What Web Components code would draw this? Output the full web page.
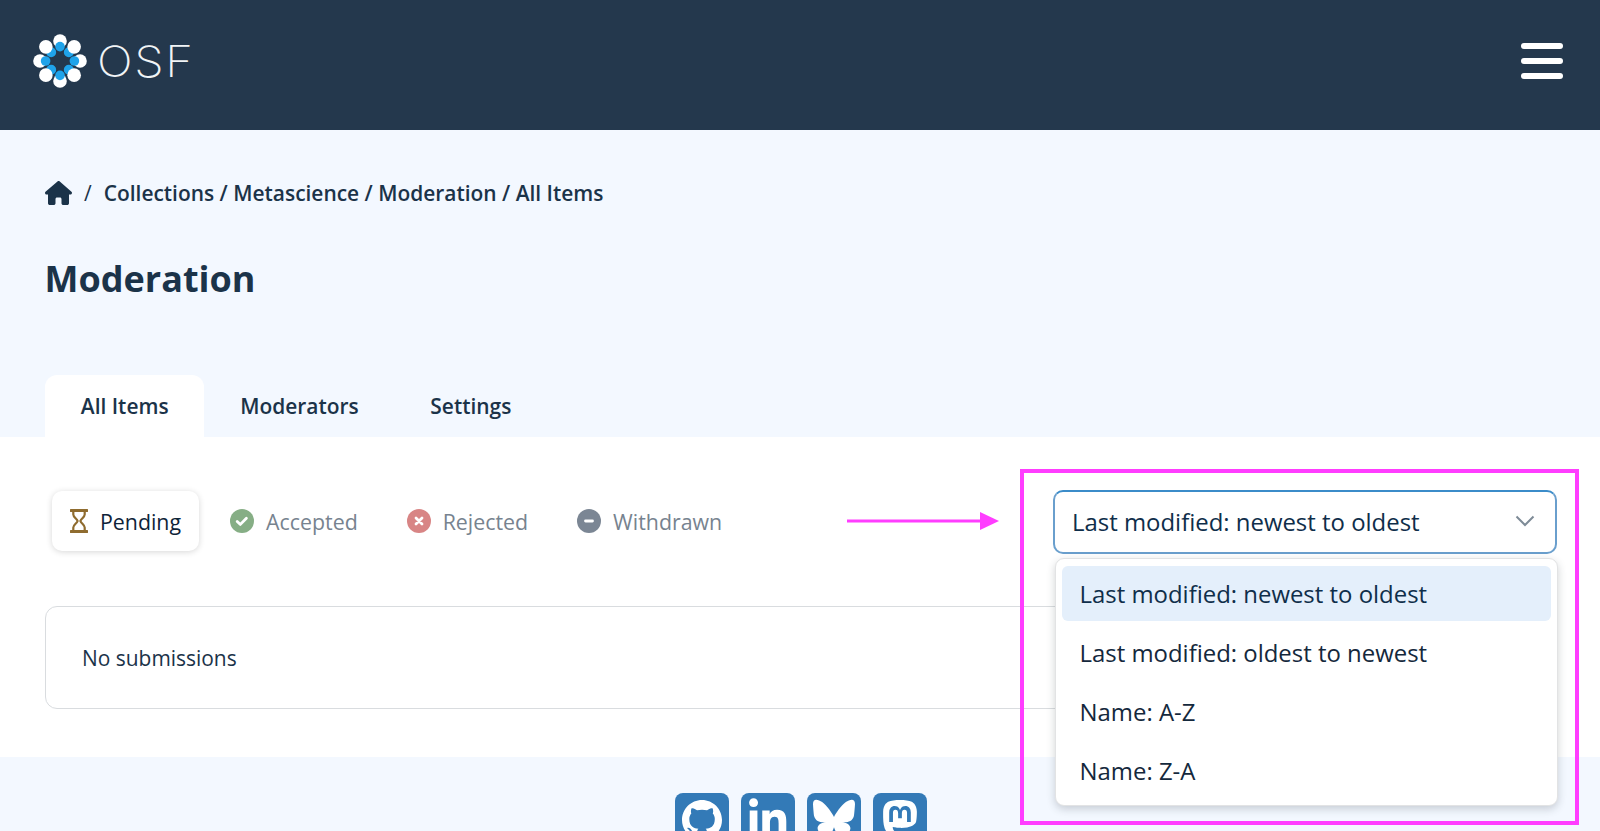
<!DOCTYPE html>
<html lang="en">
<head>
<meta charset="utf-8">
<title>Moderation</title>
<style>
  html, body { margin: 0; height: 831px; overflow: hidden; background: #f3f8ff; }
  body { font-family: "Open Sans", "Noto Sans", sans-serif; color: #1b3349; position: relative; }
</style>
</head>
<body>
<osf-header></osf-header>
<page-head>
  <tab-item active>All Items</tab-item>
  <tab-item>Moderators</tab-item>
  <tab-item>Settings</tab-item>
</page-head>
<mod-panel>
  <status-filter slot="filters"></status-filter>
  <sort-select slot="sort"></sort-select>
</mod-panel>
<site-footer></site-footer>
<callout-marks></callout-marks>

<script>
// top bar with the logo and the hamburger
class OsfHeader extends HTMLElement {
  constructor() {
    super()
    // diagonal blue dots go under the white ones, the straight ones on top
    let under = '', white = '', over = ''
    for (let i = 0; i < 8; i++) {
      const a = i * 45
      white += `<circle cx="30" cy="10" r="6.8" fill="#fff" transform="rotate(${a} 30 30)"/>`
      if (i % 2) under += `<circle cx="30" cy="17.5" r="5" fill="#1fa3ea" transform="rotate(${a} 30 30)"/>`
      else over += `<circle cx="30" cy="15.6" r="4.8" fill="#1fa3ea" transform="rotate(${a} 30 30)"/>`
    }
    this.attachShadow({ mode: 'open' }).innerHTML = `
      <style>
        :host { display: flex; height: 130px; background: #24384d; align-items: center; justify-content: space-between; padding: 0 37px 8px 29.5px; box-sizing: border-box; }
        .logo { display: flex; align-items: center; gap: 7px; }
        svg { display: block; }
        .name { font: 200 43px/1 Inter, "Open Sans", sans-serif; color: #f1f4f6; letter-spacing: 1.5px; transform: scaleX(1.1); transform-origin: left center; }
        .burger { display: flex; flex-direction: column; gap: 9px; }
        .burger i { display: block; width: 42px; height: 6px; border-radius: 3px; background: #fff; }
      </style>
      <div class="logo">
        <svg width="60" height="60" viewBox="0 0 60 60">${under}${white}${over}</svg>
        <span class="name">OSF</span>
      </div>
      <div class="burger"><i></i><i></i><i></i></div>`
  }
}

// breadcrumb, title and the tab row
class PageHead extends HTMLElement {
  constructor() {
    super()
    this.attachShadow({ mode: 'open' }).innerHTML = `
      <style>
        :host { display: block; height: 307px; padding: 49px 0 0 45px; box-sizing: border-box; }
        .crumbs { display: flex; align-items: center; height: 28px; font-size: 20.93px; font-weight: 600; color: #1b3349; }
        .crumbs svg { width: 27px; height: 24px; display: block; }
        .sep { margin: 0 12px 0 12px; font-weight: 400; }
        h1 { margin: 48px 0 0 -0.5px; font-size: 36px; line-height: 48px; font-weight: 700; color: #1b3349; }
        .tabs { display: flex; margin-top: 72px; }
      </style>
      <div class="crumbs">
        <svg viewBox="0 0 576 512"><path fill="#1b3349" d="M575.8 255.5c0 18-15 32.1-32 32.1h-32l.7 160.2c0 2.7-.2 5.4-.5 8.1V472c0 22.1-17.9 40-40 40H456c-1.1 0-2.2 0-3.3-.1c-1.4 .1-2.8 .1-4.2 .1H416 392c-22.1 0-40-17.9-40-40V448 384c0-17.7-14.3-32-32-32H256c-17.7 0-32 14.3-32 32v64 24c0 22.1-17.9 40-40 40H160 128.1c-1.5 0-3-.1-4.5-.2c-1.2 .1-2.4 .2-3.6 .2H104c-22.1 0-40-17.9-40-40V360c0-.9 0-1.9 .1-2.8V287.6H32c-18 0-32-14-32-32.1c0-9 3-17 10-24L266.4 8c7-7 15-8 22-8s15 2 21 7L564.8 231.5c8 7 12 15 11 24z"/></svg>
        <span class="sep">/</span>
        <span>Collections / Metascience / Moderation / All Items</span>
      </div>
      <h1>Moderation</h1>
      <div class="tabs"><slot></slot></div>`
  }
}

class TabItem extends HTMLElement {
  constructor() {
    super()
    this.attachShadow({ mode: 'open' }).innerHTML = `
      <style>
        :host { display: flex; align-items: center; height: 62px; padding: 0 35.8px; font-size: 20.93px; font-weight: 600; color: #1b3349; border-radius: 12px 12px 0 0; }
        :host([active]) { background: #fff; }
      </style>
      <slot></slot>`
  }
}

// white area, filters on the left and sort select on the right
class ModPanel extends HTMLElement {
  constructor() {
    super()
    this.attachShadow({ mode: 'open' }).innerHTML = `
      <style>
        :host { display: block; height: 320px; background: #fff; padding: 53px 43px 0 45px; box-sizing: border-box; }
        .top { display: flex; justify-content: space-between; align-items: flex-start; height: 64px; padding-left: 7px; }
        .card { margin: 52px 1px 0 0; height: 103px; box-sizing: border-box; border: 1px solid #d9dcdf; border-radius: 12px; display: flex; align-items: center; padding-left: 36px; font-size: 20.93px; color: #1b3349; }
      </style>
      <div class="top"><slot name="filters"></slot><slot name="sort"></slot></div>
      <div class="card">No submissions</div>`
  }
}

class StatusFilter extends HTMLElement {
  constructor() {
    super()
    const round = (color, mark) => `<svg width="24" height="24" viewBox="0 0 24 24"><circle cx="12" cy="12" r="12" fill="${color}"/>${mark}</svg>`
    const wht = 'fill="none" stroke="#fff" stroke-width="2.8" stroke-linecap="round" stroke-linejoin="round"'
    this.attachShadow({ mode: 'open' }).innerHTML = `
      <style>
        :host { display: flex; gap: 13px; font-size: 21.35px; margin-top: 1px; }
        .item { display: flex; align-items: center; gap: 12px; height: 60px; padding: 0 18px; color: #77838f; box-sizing: border-box; }
        .on { color: #0e2338; background: #fff; border-radius: 10px; box-shadow: 0 1px 6px rgba(0,0,0,.16); }
        svg { display: block; flex: none; }
      </style>
      <div class="item on">
        <svg width="18" height="24" viewBox="0 0 18 24">
          <path d="M1 1.5h16M1 22.5h16" stroke="#8f6c2f" stroke-width="3" stroke-linecap="round"/>
          <path d="M3.3 2v3.5c0 2.6 3.7 4.2 4.3 6.5c-.6 2.3-4.3 3.9-4.3 6.5V22M14.7 2v3.5c0 2.6-3.7 4.2-4.3 6.5c.6 2.3 4.3 3.9 4.3 6.5V22" fill="none" stroke="#8f6c2f" stroke-width="2.2"/>
        </svg>
        <span>Pending</span>
      </div>
      <div class="item">${round('#86ae85', `<path d="M7.2 12.4l3.2 3l6-6.2" ${wht}/>`)}<span>Accepted</span></div>
      <div class="item">${round('#d88585', `<path d="M9 9l6 6M15 9l-6 6" ${wht}/>`)}<span>Rejected</span></div>
      <div class="item">${round('#7b8694', `<path d="M8.5 12h7" ${wht}/>`)}<span>Withdrawn</span></div>`
  }
}

// the open sort dropdown, the options come from this list
const sortOptions = ['Last modified: newest to oldest', 'Last modified: oldest to newest', 'Name: A-Z', 'Name: Z-A']

class SortSelect extends HTMLElement {
  constructor() {
    super()
    const rows = sortOptions.map((o, i) => `<li class="${i === 0 ? 'sel' : ''}">${o}</li>`).join('')
    this.attachShadow({ mode: 'open' }).innerHTML = `
      <style>
        :host { display: block; position: relative; width: 504px; font-size: 23.93px; color: #0f2e4a; }
        .box { height: 64px; box-sizing: border-box; border: 2px solid #6a9fcd; border-top-color: #3b8cc9; border-radius: 10px; display: flex; align-items: center; justify-content: space-between; padding: 0 20px 0 17px; background: #fff; }
        .box span { margin-top: -1px; }
        .box svg { display: block; margin-top: -2px; }
        ul { position: absolute; left: 2px; right: -1px; top: 68px; margin: 0; padding: 7px 6px 0; height: 248px; box-sizing: border-box; list-style: none; background: #fff; border: 1px solid #e2e3e4; border-radius: 9px; box-shadow: 0 3px 8px rgba(40,50,60,.22); }
        li { height: 55px; margin-bottom: 4px; padding-left: 17.5px; display: flex; align-items: center; border-radius: 6px; color: #14283c; }
        .sel { background: #e4effb; color: #0f2e4a; }
      </style>
      <div class="box">
        <span>${sortOptions[0]}</span>
        <svg width="20" height="12" viewBox="0 0 20 12"><path d="M1.5 1.5L10 10l8.5-8.5" fill="none" stroke="#7e8b97" stroke-width="2"/></svg>
      </div>
      <ul>${rows}</ul>`
  }
}

class SiteFooter extends HTMLElement {
  constructor() {
    super()
    const tile = (size, vb, path, dy = 0) => `<div class="tile"><svg width="${size}" height="${size}" viewBox="${vb}" style="margin-top:${dy}px"><path fill="#fff" fill-rule="evenodd" d="${path}"/></svg></div>`
    this.attachShadow({ mode: 'open' }).innerHTML = `
      <style>
        :host { display: flex; justify-content: center; padding: 36px 0 0 0; height: 74px; box-sizing: border-box; overflow: hidden; }
        .row { display: flex; gap: 12px; margin-left: 1px; }
        .tile { width: 54px; height: 54px; border-radius: 8px; background: #337ab7; display: flex; align-items: flex-start; justify-content: center; overflow: hidden; }
        svg { display: block; flex: none; }
      </style>
      <div class="row">
        ${tile(40, '0 0 16 16', 'M8 0C3.58 0 0 3.58 0 8c0 3.54 2.29 6.53 5.47 7.59.4.07.55-.17.55-.38 0-.19-.01-.82-.01-1.49-2.01.37-2.53-.49-2.69-.94-.09-.23-.48-.94-.82-1.13-.28-.15-.68-.52-.01-.53.63-.01 1.08.58 1.23.82.72 1.21 1.87.87 2.33.66.07-.52.28-.87.51-1.07-1.78-.2-3.64-.89-3.64-3.95 0-.87.31-1.59.82-2.15-.08-.2-.36-1.02.08-2.12 0 0 .67-.21 2.2.82.64-.18 1.32-.27 2-.27s1.36.09 2 .27c1.53-1.04 2.2-.82 2.2-.82.44 1.1.16 1.92.08 2.12.51.56.82 1.27.82 2.15 0 3.07-1.87 3.75-3.65 3.95.29.25.54.73.54 1.48 0 1.07-.01 1.93-.01 2.2 0 .21.15.46.55.38A8.01 8.01 0 0 0 16 8c0-4.42-3.58-8-8-8z', 7)}
        ${tile(52, '0 0 24 24', 'M20.447 20.452h-3.554v-5.569c0-1.328-.027-3.037-1.852-3.037-1.853 0-2.136 1.445-2.136 2.939v5.667H9.351V9h3.414v1.561h.046c.477-.9 1.637-1.85 3.37-1.85 3.601 0 4.267 2.37 4.267 5.455v6.286zM5.337 7.433c-1.144 0-2.063-.926-2.063-2.065 0-1.138.92-2.063 2.063-2.063 1.14 0 2.064.925 2.064 2.063 0 1.139-.925 2.065-2.064 2.065zm1.782 13.019H3.555V9h3.564v11.452z', -2)}
        ${tile(42, '0 0 16 16', 'M3.468 1.948C5.303 3.325 7.276 6.118 8 7.616c.725-1.498 2.698-4.29 4.532-5.668C13.855.955 16 .186 16 2.632c0 .489-.28 4.105-.444 4.692-.572 2.04-2.653 2.561-4.504 2.246 3.236.551 4.06 2.375 2.281 4.2-3.376 3.464-4.852-.87-5.23-1.98-.07-.204-.103-.3-.103-.218 0-.081-.033.014-.102.218-.379 1.11-1.855 5.444-5.231 1.98-1.778-1.825-.955-3.65 2.28-4.2-1.85.315-3.932-.205-4.503-2.246C.28 6.737 0 3.12 0 2.632 0 .186 2.145.955 3.468 1.948', 4)}
        ${tile(36, '0 0 16 16', 'M11.19 12.195c2.016-.24 3.77-1.475 3.99-2.603.348-1.778.32-4.339.32-4.339 0-3.47-2.286-4.488-2.286-4.488C12.062.238 10.083.017 8.027 0h-.05C5.92.017 3.942.238 2.79.765c0 0-2.285 1.017-2.285 4.488l-.002.662c-.004.64-.007 1.35.011 2.091.083 3.394.626 6.74 3.78 7.57 1.454.383 2.703.463 3.709.408 1.823-.1 2.847-.647 2.847-.647l-.06-1.317s-1.303.41-2.767.36c-1.45-.05-2.98-.156-3.215-1.928a4 4 0 0 1-.033-.496s1.424.346 3.228.428c1.103.05 2.137-.064 3.188-.189zm1.613-2.47H11.13v-4.08c0-.859-.364-1.295-1.091-1.295-.804 0-1.207.517-1.207 1.541v2.233H7.168V5.89c0-1.024-.403-1.541-1.207-1.541-.727 0-1.091.436-1.091 1.296v4.079H3.197V5.522q0-1.288.66-2.046c.456-.505 1.052-.764 1.793-.764.856 0 1.504.328 1.933.983L8 4.39l.417-.695c.429-.655 1.077-.983 1.934-.983.74 0 1.336.259 1.791.764q.662.757.661 2.046z', 7)}
      </div>`
  }
}

// magenta annotation drawn over the screenshot: arrow and frame
class CalloutMarks extends HTMLElement {
  constructor() {
    super()
    this.attachShadow({ mode: 'open' }).innerHTML = `
      <style>
        :host { position: absolute; left: 0; top: 0; width: 1600px; height: 831px; pointer-events: none; display: block; }
        .frame { position: absolute; left: 1020px; top: 469px; width: 559px; height: 356px; box-sizing: border-box; border: 4px solid #ff3dff; }
        svg { position: absolute; left: 846px; top: 509px; }
      </style>
      <div class="frame"></div>
      <svg width="154" height="24" viewBox="0 0 154 24"><path d="M1 12h140" stroke="#ff3dff" stroke-width="3"/><path d="M134 3l19 9l-19 9z" fill="#ff3dff"/></svg>`
  }
}

customElements.define('osf-header', OsfHeader)
customElements.define('page-head', PageHead)
customElements.define('tab-item', TabItem)
customElements.define('mod-panel', ModPanel)
customElements.define('status-filter', StatusFilter)
customElements.define('sort-select', SortSelect)
customElements.define('site-footer', SiteFooter)
customElements.define('callout-marks', CalloutMarks)
</script>
</body>
</html>
